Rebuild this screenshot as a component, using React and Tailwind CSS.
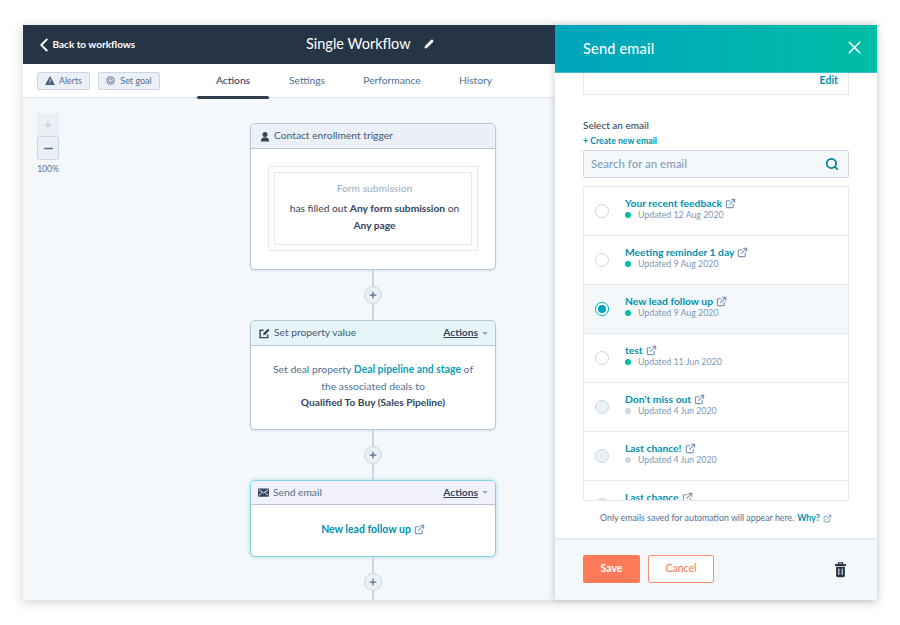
import React from 'react';
import { ChevronLeft, Plus, Minus, Pencil, X, Search, ExternalLink } from 'lucide-react';

const emails = [
  { name: 'Your recent feedback', updated: 'Updated 12 Aug 2020', live: true },
  { name: 'Meeting reminder 1 day', updated: 'Updated 9 Aug 2020', live: true },
  { name: 'New lead follow up', updated: 'Updated 9 Aug 2020', live: true, selected: true },
  { name: 'test', updated: 'Updated 11 Jun 2020', live: true },
  { name: "Don't miss out", updated: 'Updated 4 Jun 2020' },
  { name: 'Last chance!', updated: 'Updated 4 Jun 2020' },
  { name: 'Last chance' },
];

const tabs = [
  { label: 'Actions', width: 'w-[72px]' },
  { label: 'Settings', width: 'w-[76px]' },
  { label: 'Performance', width: 'w-[94px]' },
  { label: 'History', width: 'w-[73px]' },
];

const Connector = ({ height, top }) => (
  <div className="w-[2px] bg-[#cbd6e2] relative shrink-0" style={{ height }}>
    <div
      className="absolute left-1/2 -translate-x-1/2 -translate-y-1/2 w-[18px] h-[18px] rounded-full bg-[#eaf0f6] border border-[#cbd6e2] flex items-center justify-center"
      style={{ top }}
    >
      <Plus className="w-[10px] h-[10px] text-[#516f90]" strokeWidth={3} />
    </div>
  </div>
);

const ActionsMenu = () => (
  <div className="flex items-center gap-[4px]">
    <span className="text-[10.25px] font-bold text-[#33475b] underline">Actions</span>
    <span className="w-0 h-0 border-x-[3.5px] border-x-transparent border-t-[3.5px] border-t-[#99acc2]" />
  </div>
);

const MailIcon = () => (
  <svg viewBox="0 0 12 9" className="w-[11px] h-[9px]">
    <rect width="12" height="9" rx="1" fill="#33475b" />
    <path d="M1 1.5 6 5l5-3.5M1 7.5l3-2.5M11 7.5 8 5" stroke="#fff" strokeWidth="1" fill="none" />
  </svg>
);

const EditBoxIcon = () => (
  <svg viewBox="0 0 12 12" className="w-[11px] h-[11px]">
    <path d="M9.500 7v3.500H1.200V2.500H5" stroke="#33475b" strokeWidth="1.600" fill="none" />
    <path d="M4.500 7.800 5 5.400 9.800.8l1.700 1.700-4.600 4.800z" fill="#33475b" />
  </svg>
);

const PersonIcon = () => (
  <svg viewBox="0 0 12 12" className="w-[10px] h-[11px]">
    <circle cx="6" cy="3.600" r="3" fill="#33475b" />
    <path d="M1 12c0-3.400 2-5 5-5s5 1.600 5 5z" fill="#33475b" />
  </svg>
);

const TargetIcon = () => (
  <svg viewBox="0 0 12 12" className="w-[9px] h-[9px]" fill="none" stroke="#516f90">
    <circle cx="6" cy="6" r="5" strokeWidth="1.300" />
    <circle cx="6" cy="6" r="2.400" strokeWidth="1.300" />
  </svg>
);

const AlertIcon = () => (
  <svg viewBox="0 0 12 11" className="w-[10px] h-[9px]">
    <path d="M6 0 12 11H0z" fill="#425b76" />
    <path d="M6 4v3.500M6 8.500v1" stroke="#eaf0f6" strokeWidth="1.200" />
  </svg>
);

const TrashIcon = () => (
  <svg viewBox="0 0 12 17" className="w-[11px] h-[17px]">
    <path d="M3.800 3V1.200h4.400V3" stroke="#253545" strokeWidth="1.300" fill="none" />
    <rect y="2.600" width="12" height="2" rx="0.600" fill="#253545" />
    <path d="M1.200 5.600h9.600v9.400a2 2 0 0 1-2 2H3.200a2 2 0 0 1-2-2z" fill="#253545" />
    <path d="M4.200 7.500v7M7.800 7.500v7" stroke="#f5f8fa" strokeWidth="1.100" />
  </svg>
);

const LinkIcon = ({ className }) => (
  <ExternalLink className={`text-[#7c98b6] ${className}`} strokeWidth={2.5} />
);

const EmailRow = ({ email }) => (
  <div className={`h-[49px] shrink-0 flex items-center border-b border-[#e5eaf2] pl-[11px] ${email.selected ? 'bg-[#f5f8fa]' : 'bg-white'}`}>
    {email.selected ? (
      <div className="w-[14px] h-[14px] rounded-full border border-[#00a4bd] bg-white flex items-center justify-center">
        <div className="w-[8px] h-[8px] rounded-full bg-[#00a4bd]" />
      </div>
    ) : (
      <div className={`w-[14px] h-[14px] rounded-full border border-[#cbd6e2] ${email.live ? 'bg-white' : 'bg-[#eaf0f6]'}`} />
    )}
    <div className="ml-[16px] -mt-[4px]">
      <div className="flex items-center gap-[3px] text-[10.3px] leading-[12px] font-bold text-[#0091ae]">
        {email.name}
        <LinkIcon className="w-[11px] h-[11px]" />
      </div>
      <div className="flex items-center h-[12px] text-[8.8px] leading-[12px] text-[#7c98b6]">
        {email.updated && (
          <>
            <span className={`w-[6px] h-[6px] rounded-full mr-[7px] ${email.live ? 'bg-[#00bda5]' : 'bg-[#cbd6e2]'}`} />
            {email.updated}
          </>
        )}
      </div>
    </div>
  </div>
);

export default function App() {
  return (
    <div className="w-[900px] h-[625px] bg-white pt-[25px] pl-[23px] overflow-hidden font-['Lato',sans-serif]">
      <div className="flex w-[854px] h-[575px] shadow-[0_2px_10px_rgba(45,62,80,0.25)]">
        {/* workflow side */}
        <div className="w-[532px] flex flex-col">
          <div className="h-[39px] bg-[#253545] flex items-center relative shrink-0">
            <div className="flex items-center pl-[9.5px] text-white text-[10px] font-bold">
              <ChevronLeft className="w-[22px] h-[22px] -mr-[2px]" strokeWidth={2} />
              Back to workflows
            </div>
            <div className="absolute left-[283px] top-[8px] flex items-center gap-[13px] text-white text-[14.5px] leading-[22px]">
              Single Workflow
              <Pencil className="w-[10px] h-[10px] fill-white" strokeWidth={1.5} />
            </div>
          </div>

          <div className="h-[34px] bg-white border-b border-[#dfe3eb] flex items-center pl-[14px] shrink-0">
            <div className="flex items-center h-[18px] w-[53px] justify-center gap-[4px] bg-[#eaf0f6] border border-[#cbd6e2] rounded-[2px] text-[8.8px] text-[#516f90]">
              <AlertIcon />
              Alerts
            </div>
            <div className="flex items-center h-[18px] w-[62px] justify-center gap-[5px] ml-[8px] bg-[#eaf0f6] border border-[#cbd6e2] rounded-[2px] text-[9px] text-[#516f90]">
              <TargetIcon />
              Set goal
            </div>
            <div className="flex h-full ml-[37px] text-[10.25px] text-[#516f90]">
              {tabs.map((t, i) => (
                <div
                  key={t.label}
                  className={`relative flex items-center justify-center ${t.width} ${i === 0 ? 'text-[#33475b] font-medium' : ''}`}
                >
                  {t.label}
                  {i === 0 && <div className="absolute left-0 right-0 -bottom-[2px] h-[3px] rounded-[2px] bg-[#2d3e50]" />}
                </div>
              ))}
            </div>
          </div>

          <div className="flex-1 bg-[#f5f8fa] flex overflow-hidden">
            <div className="w-[22px] ml-[14px] mt-[15px] shrink-0 flex flex-col items-center">
              <div className="w-[22px] h-[23px] bg-[#eaf0f6] rounded-[2px] flex items-center justify-center">
                <Plus className="w-[12px] h-[12px] text-[#b9c9d9]" strokeWidth={2} />
              </div>
              <div className="w-[22px] h-[24px] bg-[#eaf0f6] border border-[#cbd6e2] rounded-[2px] flex items-center justify-center">
                <Minus className="w-[13px] h-[13px] text-[#516f90]" strokeWidth={2.5} />
              </div>
              <div className="text-[8.5px] text-[#516f90] mt-[3px]">100%</div>
            </div>

            <div className="ml-[191px] mt-[25px] w-[246px] flex flex-col items-center">
              <div className="w-full h-[147px] shrink-0 rounded-[5px] border border-[#b8c6d8] bg-white overflow-hidden shadow-[0_1px_2px_rgba(45,62,80,0.12)]">
                <div className="h-[25px] bg-[#eaf0f6] border-b border-[#b8c6d8] flex items-center pl-[9px] gap-[4px] text-[10.25px] text-[#425b76]">
                  <PersonIcon />
                  Contact enrollment trigger
                </div>
                <div className="mx-[17px] mt-[17px] border border-[#e5eaf2] p-[5px]">
                  <div className="h-[73px] border border-[#e5eaf2] flex flex-col items-center justify-center pb-[4px] pl-[3px] text-[10.25px] leading-[17px] text-[#33475b]">
                    <div className="text-[#99acc2] mb-[3px]">Form submission</div>
                    <div>has filled out <b>Any form submission</b> on</div>
                    <b>Any page</b>
                  </div>
                </div>
              </div>

              <Connector height={50} top={25} />

              <div className="w-full h-[110px] shrink-0 rounded-[5px] border border-[#b8c6d8] bg-white overflow-hidden shadow-[0_1px_2px_rgba(45,62,80,0.12)]">
                <div className="h-[25px] bg-[#e5f5f8] border-b border-[#b8c6d8] flex items-center justify-between pl-[8px] pr-[7px] text-[10.25px] text-[#425b76]">
                  <div className="flex items-center gap-[4px]">
                    <EditBoxIcon />
                    Set property value
                  </div>
                  <ActionsMenu />
                </div>
                <div className="pt-[15px] text-center text-[10.4px] leading-[16.5px] text-[#516f90]">
                  <div>Set deal property <span className="font-bold text-[#0f9fb8]">Deal pipeline and stage</span> of</div>
                  <div>the associated deals to</div>
                  <div className="font-bold text-[10.2px] text-[#33475b]">Qualified To Buy (Sales Pipeline)</div>
                </div>
              </div>

              <Connector height={50} top={25} />

              <div className="w-full h-[77px] shrink-0 rounded-[5px] border border-[#7fd1de] bg-white overflow-hidden shadow-[0_0_4px_rgba(0,164,189,0.35)]">
                <div className="h-[24px] bg-[#f0f1fa] border-b border-[#b8c6d8] flex items-center justify-between pl-[7px] pr-[7px] text-[10.25px] text-[#516f90]">
                  <div className="flex items-center gap-[4px]">
                    <MailIcon />
                    Send email
                  </div>
                  <ActionsMenu />
                </div>
                <div className="flex items-center justify-center gap-[3px] h-[49px] text-[10.5px] font-bold text-[#0091ae]">
                  New lead follow up
                  <LinkIcon className="w-[11px] h-[11px]" />
                </div>
              </div>

              <Connector height={43} top={25} />
            </div>
          </div>
        </div>

        {/* send email panel */}
        <div className="w-[322px] flex flex-col bg-white shadow-[-2px_0_6px_rgba(45,62,80,0.18)] z-10">
          <div className="h-[48px] shrink-0 bg-gradient-to-r from-[#00a4bd] to-[#00bda5] border-b border-[#33c1cf] flex items-center justify-between pl-[28px] pr-[12px] text-white">
            <span className="text-[14.5px] font-medium tracking-[0.2px] mt-[1px]">Send email</span>
            <X className="w-[21px] h-[21px] -mt-[2px]" strokeWidth={1.8} />
          </div>

          <div className="h-[465px] shrink-0 px-[28px] flex flex-col">
            <div className="h-[22px] shrink-0 border-x border-b border-[#e5eaf2] flex items-start justify-end pr-[10px] pt-[1px] text-[10.5px] leading-[12px] font-bold text-[#0091ae]">
              Edit
            </div>
            <div className="mt-[23px] text-[10px] leading-[14px] font-medium text-[#33475b]">Select an email</div>
            <div className="text-[8.7px] leading-[12px] mt-[3px] font-bold text-[#0091ae]">+ Create new email</div>
            <div className="mt-[3px] h-[28px] shrink-0 bg-[#f5f8fa] border border-[#cbd6e2] rounded-[2px] flex items-center justify-between pl-[7px] pr-[9px] text-[11.5px] text-[#7c98b6]">
              Search for an email
              <Search className="w-[14px] h-[14px] text-[#00829b]" strokeWidth={3} />
            </div>
            <div className="mt-[8px] h-[315px] shrink-0 border border-[#e5eaf2] overflow-hidden flex flex-col">
              {emails.map((e) => (
                <EmailRow key={e.name} email={e} />
              ))}
            </div>
            <div className="mt-[11px] flex items-center justify-center gap-[3px] text-[8.8px] leading-[12px] text-[#516f90]">
              Only emails saved for automation will appear here.
              <span className="font-bold text-[#0091ae]">Why?</span>
              <LinkIcon className="w-[9px] h-[9px]" />
            </div>
          </div>

          <div className="flex-1 bg-[#f5f8fa] border-t-2 border-[#e5eaf2] flex items-center px-[28px] pb-[2px]">
            <button className="w-[57px] h-[28px] rounded-[2px] bg-[#ff7a59] text-white text-[10.5px] font-bold">Save</button>
            <button className="w-[66px] h-[28px] ml-[8px] rounded-[2px] bg-white border border-[#ff8f73] text-[#ff7a59] text-[10.5px] font-medium">Cancel</button>
            <div className="ml-auto mr-[3px]">
              <TrashIcon />
            </div>
          </div>
        </div>
      </div>
    </div>
  );
}
